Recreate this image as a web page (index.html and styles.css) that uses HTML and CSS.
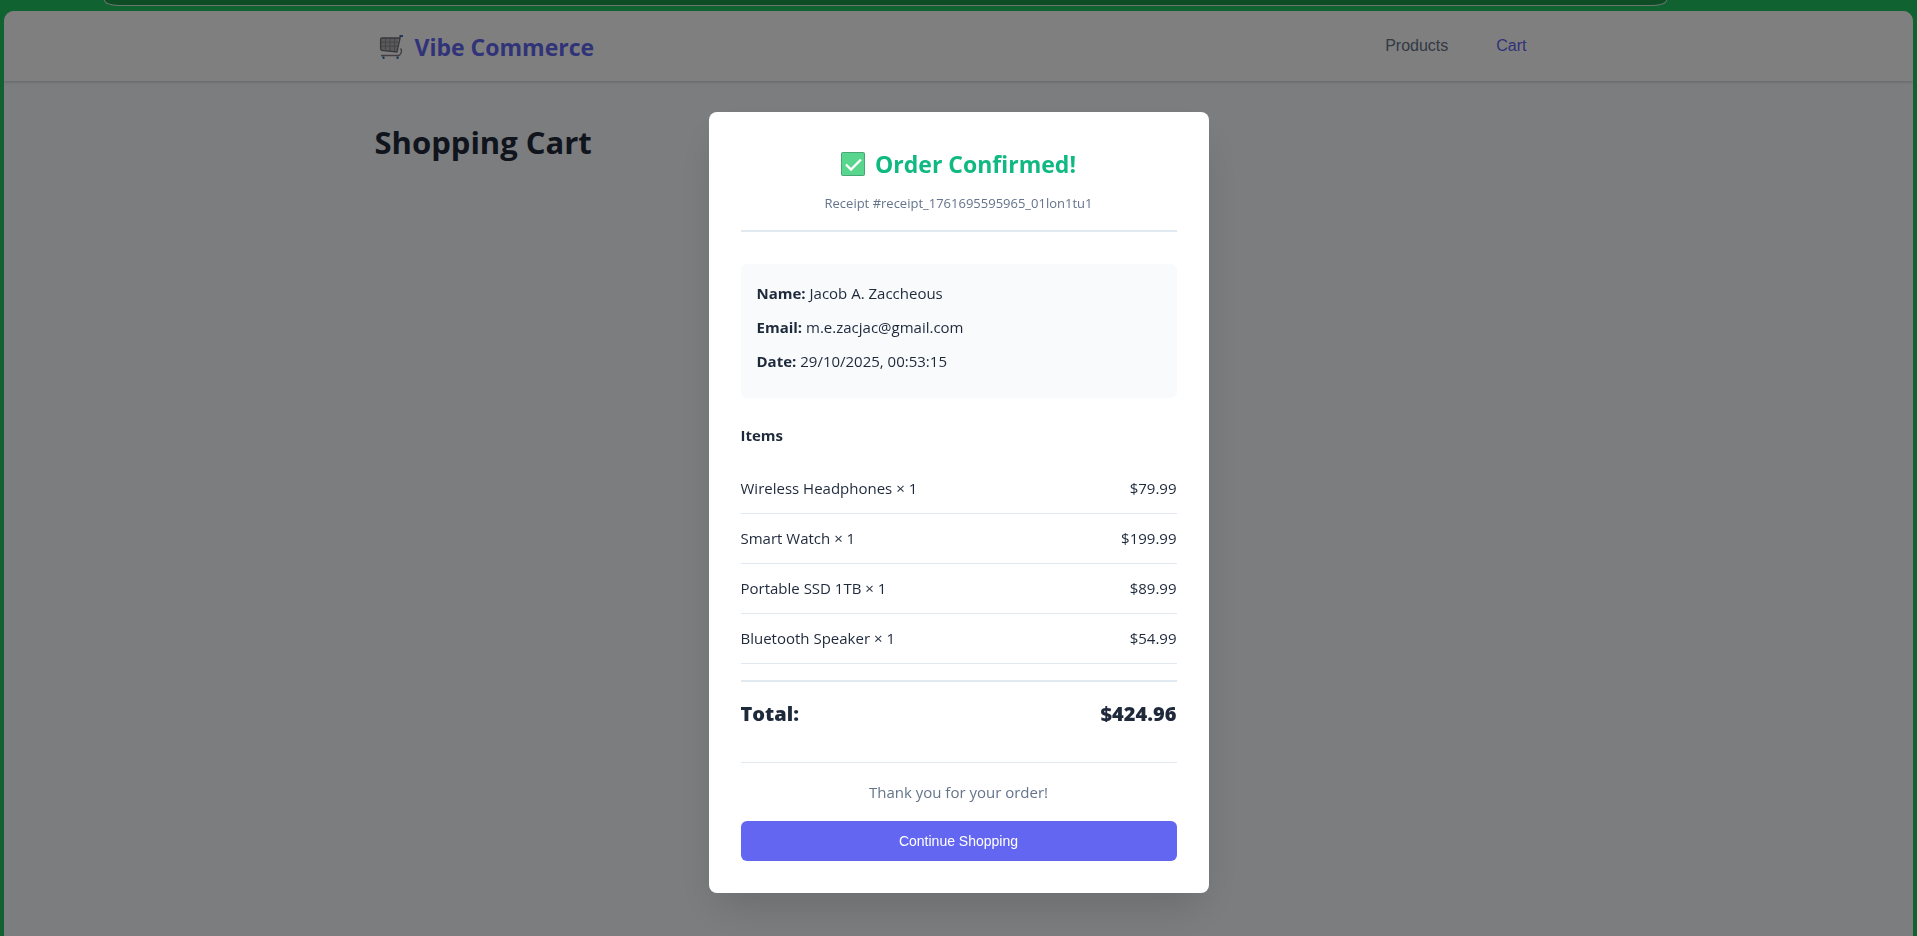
FILE: index.html
```html
<!DOCTYPE html>
<html lang="en">
<head>
<meta charset="utf-8">
<title>Vibe Commerce</title>
<link rel="stylesheet" href="styles.css">
</head>
<body>
<div class="browser">
  <div class="address-bar"></div>
  <div class="page">
    <header class="site-header">
      <div class="container site-header-inner">
        <div class="logo">
          <svg class="logo-icon" viewBox="0 0 26 26" fill="none" aria-hidden="true">
            <path d="M2 4h18l-2 14-14-1.500Q2 16 2 14z" fill="#b4b4b8"/>
            <path d="M2 8.200h17.500M2 12.200h17M6.500 4v12.500M11 4v13M15.500 4v13.500" stroke="#8b8b90" stroke-width="1"/>
            <path d="M20.500 4H3Q1.600 4 1.600 5.500V14q0 2.500 2.400 2.700l14 1.300L21.500 2" stroke="#6f6f75" stroke-width="1.300"/>
            <path d="M21.500 14.500q2 2 0 5.500-.8 1.500-2.500 1.500H2" stroke="#8a7c86" stroke-width="1.400"/>
            <path d="M20.500 2h3.500" stroke="#3c6fb8" stroke-width="2.200"/>
            <path d="M3 22.500h2.500v2.500H4zM17.500 22.500h2.500l-.8 2.500h-1.500z" fill="#3a66a8"/>
          </svg>
          <span>Vibe Commerce</span>
        </div>
        <nav class="nav">
          <button class="nav-link" type="button">Products</button>
          <button class="nav-link nav-link-active" type="button">Cart</button>
        </nav>
      </div>
    </header>
    <main class="container">
      <h1 class="page-title">Shopping Cart</h1>
    </main>
  </div>
</div>
<div class="overlay">
  <section class="modal" role="dialog" aria-modal="true" aria-labelledby="receipt-title">
    <div class="receipt-header">
      <h2 class="receipt-title" id="receipt-title">
        <svg class="check-icon" viewBox="0 0 24 24" aria-hidden="true">
          <rect width="24" height="24" rx="2" fill="#46a874"/>
          <rect x="1" y="1" width="22" height="22" rx="1" fill="#58d68d"/>
          <path d="M5 12.500l5 5L20 7.500" fill="none" stroke="#fff" stroke-width="2.400"/>
        </svg>
        <span>Order Confirmed!</span>
      </h2>
      <p class="receipt-id">Receipt #receipt_1761695595965_01lon1tu1</p>
    </div>
    <div class="details">
      <p class="detail"><strong>Name:</strong> Jacob A. Zaccheous</p>
      <p class="detail"><strong>Email:</strong> m.e.zacjac@gmail.com</p>
      <p class="detail"><strong>Date:</strong> 29/10/2025, 00:53:15</p>
    </div>
    <h3 class="items-title">Items</h3>
    <ul class="items">
      <li class="item"><span>Wireless Headphones × 1</span><span>$79.99</span></li>
      <li class="item"><span>Smart Watch × 1</span><span>$199.99</span></li>
      <li class="item"><span>Portable SSD 1TB × 1</span><span>$89.99</span></li>
      <li class="item"><span>Bluetooth Speaker × 1</span><span>$54.99</span></li>
    </ul>
    <div class="total"><span>Total:</span><span>$424.96</span></div>
    <div class="receipt-footer">
      <p class="thanks">Thank you for your order!</p>
      <button class="continue" type="button">Continue Shopping</button>
    </div>
  </section>
</div>
</body>
</html>
```
FILE: styles.css
```css
* {
  box-sizing: border-box;
  margin: 0;
  padding: 0;
}

body {
  min-height: 100vh;
  overflow: hidden;
  background: #20c460;
  color: #1e293b;
  font-family: "Open Sans", "Noto Sans", sans-serif;
  font-size: 15px;
  line-height: 26px;
}

.browser {
  display: flex;
  flex-direction: column;
  height: 100vh;
  padding: 0 4px;
}

.address-bar {
  height: 6px;
  margin: 0 246px 5px 100px;
  border: 1px solid #d4f0de;
  border-top: 0;
  border-radius: 0 0 14px 14px / 0 0 6px 6px;
  background: #1c984c;
}

.page {
  flex: 1;
  overflow: hidden;
  border-radius: 10px 10px 0 0;
  background: #f8fafc;
}

.container {
  width: 100%;
  max-width: 1200px;
  margin: 0 auto;
  padding: 0 16px;
}

.site-header {
  padding: 17px 0 15px;
  background: #fff;
  box-shadow: 0 1px 3px rgba(0, 0, 0, 0.2);
}

.site-header-inner {
  display: flex;
  align-items: center;
  justify-content: space-between;
}

.logo {
  display: flex;
  align-items: center;
  gap: 10px;
  padding-left: 4px;
  color: #6366f1;
  font-size: 23px;
  font-weight: 700;
  line-height: 38px;
}

.logo-icon {
  width: 26px;
  height: 26px;
}

.nav {
  display: flex;
  gap: 16px;
}

.nav-link {
  padding: 8px 16px;
  border: 0;
  border-bottom: 2px solid transparent;
  background: none;
  color: #64748b;
  font-family: "Liberation Sans", Arial, sans-serif;
  font-size: 16px;
  line-height: 18px;
}

.nav-link-active {
  color: #6366f1;
}

.page-title {
  margin-top: 35px;
  font-size: 31px;
  font-weight: 700;
  line-height: 52px;
}

.overlay {
  position: fixed;
  inset: 0;
  display: flex;
  align-items: flex-start;
  justify-content: center;
  padding-top: 112px;
  background: rgba(0, 0, 0, 0.5);
}

.modal {
  width: 100%;
  max-width: 500px;
  padding: 32px;
  border-radius: 8px;
  background: #fff;
  box-shadow: 0 20px 40px -8px rgba(0, 0, 0, 0.15);
}

.receipt-header {
  margin-bottom: 32px;
  padding-bottom: 16px;
  border-bottom: 2px solid #e2e8f0;
  text-align: center;
}

.receipt-title {
  display: flex;
  align-items: center;
  justify-content: center;
  gap: 10px;
  margin-bottom: 8px;
  color: #10b981;
  font-size: 23px;
  font-weight: 700;
  line-height: 40px;
}

.check-icon {
  width: 24px;
  height: 24px;
}

.receipt-id {
  color: #64748b;
  font-size: 13px;
  line-height: 22px;
}

.details {
  margin-bottom: 24px;
  padding: 16px;
  border-radius: 6px;
  background: #f8fafc;
}

.detail {
  margin-bottom: 8px;
}

.items-title {
  margin-bottom: 16px;
  font-size: 15px;
  font-weight: 700;
}

.items {
  margin-bottom: 16px;
  list-style: none;
}

.item {
  display: flex;
  justify-content: space-between;
  padding: 12px 0;
  border-bottom: 1px solid #e2e8f0;
  line-height: 25px;
}

.total {
  display: flex;
  justify-content: space-between;
  margin-bottom: 32px;
  padding-top: 16px;
  border-top: 2px solid #e2e8f0;
  font-size: 20px;
  font-weight: 800;
  line-height: 32px;
}

.receipt-footer {
  padding-top: 16px;
  border-top: 1px solid #e2e8f0;
  text-align: center;
}

.thanks {
  margin-bottom: 16px;
  color: #64748b;
}

.continue {
  width: 100%;
  height: 40px;
  border: 0;
  border-radius: 6px;
  background: #6366f1;
  color: #fff;
  font-family: "Liberation Sans", Arial, sans-serif;
  font-size: 14px;
}
```
